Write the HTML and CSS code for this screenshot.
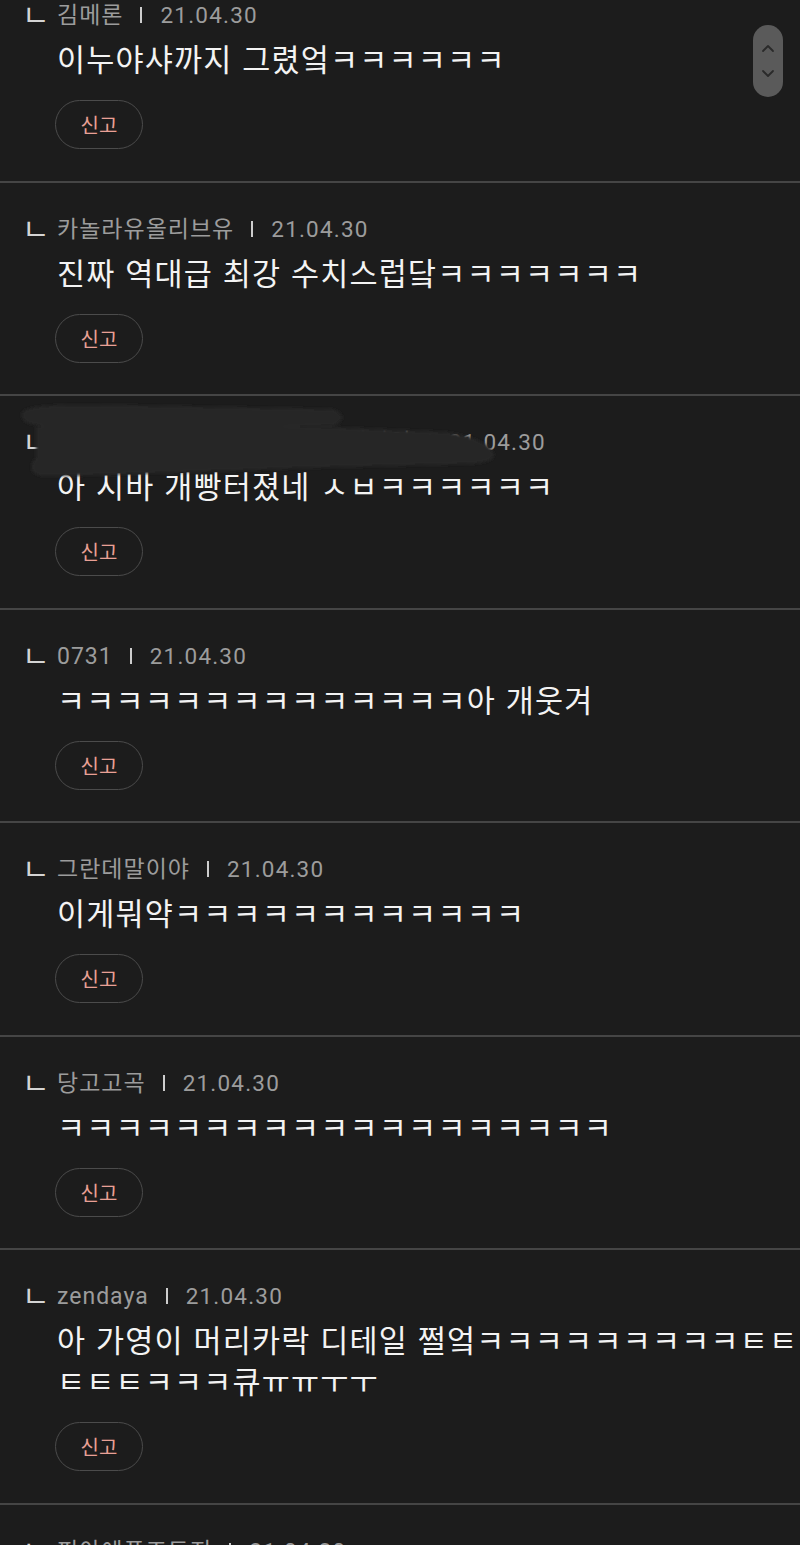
FILE: index.html
```html
<!DOCTYPE html>
<html lang="ko">
<head>
<meta charset="utf-8">
<title>댓글</title>
<link rel="stylesheet" href="styles.css">
</head>
<body>
<div class="page">
  <div class="comment">
    <div class="meta"><span class="mark">ㄴ</span><span class="name">김메론</span><span class="sep"></span><span class="date">21.04.30</span></div>
    <p class="text">이누야샤까지 그렸엌ㅋㅋㅋㅋㅋㅋ</p>
    <button class="report">신고</button>
  </div>
  <div class="comment">
    <div class="meta"><span class="mark">ㄴ</span><span class="name">카놀라유올리브유</span><span class="sep"></span><span class="date">21.04.30</span></div>
    <p class="text">진짜 역대급 최강 수치스럽닼ㅋㅋㅋㅋㅋㅋㅋ</p>
    <button class="report">신고</button>
  </div>
  <div class="comment redacted">
    <div class="meta"><span class="mark">ㄴ</span><span class="name">숨겨진닉네임입니다숨겨진닉네임임</span><span class="sep"></span><span class="date">21.04.30</span></div>
    <p class="text">아 시바 개빵터졌네 ㅅㅂㅋㅋㅋㅋㅋㅋ</p>
    <button class="report">신고</button>
    <svg class="smear" width="520" height="100" viewBox="0 0 520 100" aria-hidden="true">
      <defs><filter id="soft" x="-5%" y="-20%" width="110%" height="140%"><feGaussianBlur stdDeviation="1.4"/></filter></defs>
      <g fill="#272727" filter="url(#soft)">
        <path d="M22 18 C22 9 60 8 110 9 L330 13 C346 15 346 28 330 30 L70 31 C28 31 22 27 22 18 Z"/>
        <path d="M36 31 C60 27 200 28 330 31 L445 36 C474 40 490 48 494 58 C494 64 486 67 470 68 L300 72 C200 76 90 80 46 80 C30 80 28 70 36 62 Z"/>
      </g>
    </svg>
  </div>
  <div class="comment">
    <div class="meta"><span class="mark">ㄴ</span><span class="name">0731</span><span class="sep"></span><span class="date">21.04.30</span></div>
    <p class="text">ㅋㅋㅋㅋㅋㅋㅋㅋㅋㅋㅋㅋㅋㅋ아 개웃겨</p>
    <button class="report">신고</button>
  </div>
  <div class="comment">
    <div class="meta"><span class="mark">ㄴ</span><span class="name">그란데말이야</span><span class="sep"></span><span class="date">21.04.30</span></div>
    <p class="text">이게뭐약ㅋㅋㅋㅋㅋㅋㅋㅋㅋㅋㅋㅋ</p>
    <button class="report">신고</button>
  </div>
  <div class="comment">
    <div class="meta"><span class="mark">ㄴ</span><span class="name">당고고곡</span><span class="sep"></span><span class="date">21.04.30</span></div>
    <p class="text">ㅋㅋㅋㅋㅋㅋㅋㅋㅋㅋㅋㅋㅋㅋㅋㅋㅋㅋㅋ</p>
    <button class="report">신고</button>
  </div>
  <div class="comment">
    <div class="meta"><span class="mark">ㄴ</span><span class="name">zendaya</span><span class="sep"></span><span class="date">21.04.30</span></div>
    <p class="text">아 가영이 머리카락 디테일 쩔엌ㅋㅋㅋㅋㅋㅋㅋㅋㅋㅌㅌㅌㅌㅌㅋㅋㅋ큐ㅠㅠㅜㅜ</p>
    <button class="report">신고</button>
  </div>
  <div class="comment">
    <div class="meta"><span class="mark">ㄴ</span><span class="name">피아에푸조도지</span><span class="sep"></span><span class="date">21.04.30</span></div>
    <p class="text">ㅋㅋㅋ</p>
    <button class="report">신고</button>
  </div>
</div>
<div class="scroller" aria-hidden="true">
  <svg width="30" height="72" viewBox="0 0 30 72">
    <path d="M10 26 L15 21 L20 26" fill="none" stroke="#2a2a2a" stroke-width="1.8" stroke-linecap="round" stroke-linejoin="round"/>
    <path d="M10 46 L15 51 L20 46" fill="none" stroke="#2a2a2a" stroke-width="1.8" stroke-linecap="round" stroke-linejoin="round"/>
  </svg>
</div>
</body>
</html>
```
FILE: styles.css
```css
html, body {
  margin: 0;
  padding: 0;
  background: #1c1c1c;
}

body {
  font-family: Roboto, "Noto Sans CJK KR", sans-serif;
  overflow: hidden;
}

.page {
  width: 800px;
}

.comment {
  padding: 0 0 31.5px 27px;
}

.comment + .comment {
  border-top: 2px solid #454545;
  padding-top: 31px;
}

.redacted {
  position: relative;
}

.meta {
  display: flex;
  align-items: baseline;
  height: 30px;
  line-height: 30px;
  font-size: 22px;
  color: #9c9c9c;
  white-space: nowrap;
}

.mark {
  position: relative;
  top: 3px;
  width: 30px;
  margin-left: -5px;
  margin-right: 5px;
  font-size: 30px;
  line-height: 0;
  color: #d4d4d4;
  font-family: "Noto Sans CJK KR", sans-serif;
}

.name {
  font-family: Roboto, "Noto Sans CJK KR", sans-serif;
  font-size: 23px;
  letter-spacing: 1px;
}

.sep {
  align-self: center;
  width: 2px;
  height: 16px;
  margin: 0 18px 0 17px;
  background: #cdcdcd;
}

.date {
  font-size: 22.5px;
  letter-spacing: 1.2px;
}

.text {
  margin: 8px 0 0 30px;
  font-family: "Noto Sans CJK KR", sans-serif;
  font-size: 30.5px;
  letter-spacing: 1.2px;
  line-height: 41px;
  color: #f3f3f3;
}

.report {
  display: block;
  margin: 21px 0 0 28px;
  width: 88px;
  height: 49px;
  padding: 0;
  border: 1.5px solid #4b4b4b;
  border-radius: 25px;
  background: transparent;
  color: #e9a095;
  font-family: "Noto Sans CJK KR", sans-serif;
  font-size: 20px;
}

.smear {
  position: absolute;
  top: 0;
  left: 0;
}

.scroller {
  position: fixed;
  top: 25px;
  right: 17px;
  width: 30px;
  height: 72px;
  border-radius: 15px;
  background: #5a5a5a;
}

.scroller svg {
  display: block;
}
```
